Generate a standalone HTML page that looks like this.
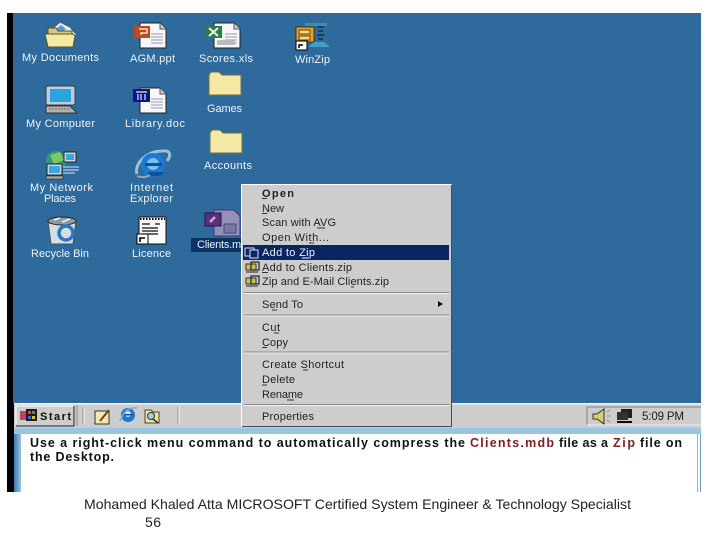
<!DOCTYPE html>
<html><head><meta charset="utf-8"><style>
html,body{margin:0;padding:0;background:#fff;width:720px;height:540px;overflow:hidden}
svg{display:block}
text{font-family:"Liberation Sans",sans-serif;font-size:11px}
.d text{fill:#eef3f8}
.m text{fill:#222}
.b text{font-weight:bold;font-size:12.5px;fill:#111}
</style></head><body>
<svg width="720" height="540" viewBox="0 0 720 540" xmlns="http://www.w3.org/2000/svg">
<defs>
<filter id="s" x="-5%" y="-5%" width="110%" height="110%"><feGaussianBlur stdDeviation="0.35"/></filter>
<linearGradient id="lb" x1="0" x2="1" y1="0" y2="0"><stop offset="0" stop-color="#3b78aa"/><stop offset="1" stop-color="#9cc4df"/></linearGradient>
<g id="folder"><path d="M1 4 L3 1 H11 L14 4 H33 V24 H1Z" fill="#f5e8a4" stroke="#6f7048"/></g>
<g id="page"><path d="M0 0H20L26 6V25H0Z" fill="#f7f7fb" stroke="#222"/><path d="M20 0V6H26" fill="#ccc" stroke="#555"/><path d="M11 11H23M11 14H23M11 17H23M11 20H23" stroke="#9a9aa8"/></g>
</defs>
<rect x="7" y="13" width="7" height="479" fill="#000"/>
<rect x="13" y="13" width="688" height="390" fill="#2f6a9c"/>
<rect x="14" y="403" width="687" height="25" fill="#cdcdcd"/>
<rect x="14" y="403" width="687" height="1.5" fill="#f4f4f4"/>
<rect x="14" y="428" width="687" height="6" fill="#9cc4df"/>
<rect x="14" y="434" width="7" height="58" fill="url(#lb)"/>
<rect x="21" y="434" width="676" height="58" fill="#fff"/>
<rect x="697" y="434" width="1" height="58" fill="#8fb5cf"/>
<rect x="700" y="434" width="1" height="58" fill="#6f9dbd"/>

<g filter="url(#s)">
<!-- My Documents -->
<path d="M52 29L60 22L70 27L77 35L70 38H54Z" fill="#e4eef4" stroke="#3e5a74"/><path d="M56 29L61 25L66 29L61 32Z" fill="#4f9ad0"/>
<path d="M48 28H56L58 31H72V47H48Z" fill="#d8c97e" stroke="#55562f"/><path d="M45 34H73L75 36L73 47H48Z" fill="#f5e9a6" stroke="#55562f"/>
<!-- AGM -->
<use href="#page" x="140" y="23"/><rect x="134" y="26" width="16" height="12" fill="#bf4a1e"/><path d="M139 29H147V33H141V35" fill="none" stroke="#f4ddc8" stroke-width="1.5"/>
<!-- Scores -->
<use href="#page" x="214" y="23"/><rect x="205" y="26" width="17" height="12" fill="#2e7a4c"/><path d="M209 28L218 36M218 28L209 36" stroke="#e6f2e4" stroke-width="2"/><rect x="217" y="40" width="18" height="5" fill="#bbb"/>
<!-- WinZip -->
<rect x="296" y="27" width="18" height="15" fill="#e9a52a" stroke="#4a2b0a"/><rect x="299" y="30" width="11" height="4" fill="#f6d77a" stroke="#6a3c0a"/><rect x="299" y="36" width="11" height="4" fill="#f6d77a" stroke="#6a3c0a"/><rect x="305" y="23" width="22" height="3" fill="#3c8bb8"/><path d="M317 27H324M318 31H323M317 35H324M318 39H323" stroke="#1e3f5a" stroke-width="2"/><path d="M308 47H330L324 42H314Z" fill="#3fa0c8"/><rect x="296" y="41" width="11" height="9" fill="#fff" stroke="#000"/><path d="M299 48L299 45H303" stroke="#000" fill="none" stroke-width="1.5"/>
<!-- Games / Accounts -->
<use href="#folder" x="208" y="71"/><use href="#folder" x="209" y="129"/>
<!-- My Computer -->
<rect x="46" y="86" width="29" height="19" rx="2" fill="#c2ccd8" stroke="#33414f"/><rect x="50" y="89" width="21" height="13" fill="#2aa4dc"/><path d="M46 106H70L77 113H46Z" fill="#b8b4ac" stroke="#333"/><path d="M49 109H71" stroke="#666" stroke-dasharray="2 1"/>
<!-- Library -->
<use href="#page" x="140" y="88"/><rect x="133" y="89" width="17" height="13" fill="#0b1482"/><path d="M136 92H147M138 94V100M141 94V100M145 94V100" stroke="#e8e8ff" stroke-width="1.2"/>
<!-- Network -->
<circle cx="56" cy="161" r="10" fill="#2f9c72"/><path d="M50 155L60 152L64 160L54 164Z" fill="#7fc66a"/><rect x="64" y="152" width="12" height="10" fill="#cdd8e4" stroke="#222"/><rect x="66" y="154" width="8" height="6" fill="#3aa6de"/><rect x="47" y="164" width="15" height="11" fill="#cdd8e4" stroke="#222"/><rect x="49" y="166" width="11" height="7" fill="#3aa6de"/><rect x="46" y="176" width="17" height="3" fill="#aaa" stroke="#333" stroke-width=".7"/><path d="M63 167H79M63 170H79M63 173H75" stroke="#d8e6f0"/>
<!-- IE -->
<path d="M137 174C134 164 146 151 163 151C171 150 171 156 167 161" fill="none" stroke="#9cc0dc" stroke-width="3"/><circle cx="153" cy="165" r="12" fill="#1b7ad2"/><circle cx="153" cy="164" r="6" fill="#7cc0ee"/><rect x="145" y="163" width="17" height="3" fill="#0d4fa0"/><path d="M147 172H164L160 176H150Z" fill="#0d4fa0"/><path d="M137 176C141 178 147 177 150 175" stroke="#8aa8c0" stroke-width="2" fill="none"/>
<!-- Recycle -->
<path d="M48 221H76L73 244H51Z" fill="#d6dde4" stroke="#41525e"/><ellipse cx="62" cy="221" rx="14" ry="4" fill="#8f9aa2" stroke="#222"/><path d="M54 220L60 218M62 222L70 219" stroke="#eee" stroke-width="1.5"/><circle cx="66" cy="233" r="7" fill="none" stroke="#2c78c8" stroke-width="3.5"/>
<!-- Licence -->
<rect x="139" y="217" width="27" height="27" rx="1" fill="#fbfbfb" stroke="#111"/><path d="M140 219H165" stroke="#000" stroke-dasharray="1.5 1.5" stroke-width="2"/><path d="M142 224H150M142 228H158M142 231H158M142 234H158M155 224H160" stroke="#111" stroke-width="1.3"/><rect x="137" y="234" width="11" height="10" fill="#fff" stroke="#000"/><path d="M140 242V238H145" stroke="#000" fill="none" stroke-width="1.6"/>
<!-- Clients -->
<path d="M214 210H234L240 216V236H214Z" fill="#9490bc" stroke="#3d3a6e"/><path d="M224 224H236V233H224Z" fill="#7a78a8" stroke="#4a4878"/><rect x="205" y="213" width="16" height="13" fill="#56307e" stroke="#281648"/><path d="M210 222L215 217" stroke="#e0a0d8" stroke-width="2.5"/>
</g>
<rect x="191" y="238" width="50" height="14" fill="#0a3263"/>

<g class="d">
<text x="22" y="61" textLength="77" lengthAdjust="spacing">My Documents</text>
<text x="130" y="62" textLength="45" lengthAdjust="spacing">AGM.ppt</text>
<text x="199" y="62" textLength="54" lengthAdjust="spacing">Scores.xls</text>
<text x="295" y="63" textLength="35" lengthAdjust="spacing">WinZip</text>
<text x="207" y="112" textLength="35" lengthAdjust="spacing">Games</text>
<text x="26" y="127" textLength="69" lengthAdjust="spacing">My Computer</text>
<text x="125" y="127" textLength="60" lengthAdjust="spacing">Library.doc</text>
<text x="204" y="169" textLength="48" lengthAdjust="spacing">Accounts</text>
<text x="30" y="191" textLength="63" lengthAdjust="spacing">My Network</text>
<text x="44" y="202" textLength="32" lengthAdjust="spacing">Places</text>
<text x="130" y="191" textLength="43" lengthAdjust="spacing">Internet</text>
<text x="130" y="202" textLength="43" lengthAdjust="spacing">Explorer</text>
<text x="31" y="257" textLength="58" lengthAdjust="spacing">Recycle Bin</text>
<text x="132" y="257" textLength="39" lengthAdjust="spacing">Licence</text>
<text x="197" y="248" textLength="56" lengthAdjust="spacing">Clients.mdb</text>
</g>

<!-- Taskbar -->
<rect x="16" y="406" width="58" height="20" fill="#cdcdcd"/><path d="M16 426H74V406" stroke="#222" fill="none"/><path d="M16 425V406H73" stroke="#fff" fill="none"/>
<g filter="url(#s)">
<rect x="20" y="411" width="6" height="9" fill="#c04060"/><rect x="26" y="409" width="11" height="12" fill="#1c1c1c"/><rect x="28" y="411" width="3" height="3" fill="#d8502a"/><rect x="32" y="411" width="3" height="3" fill="#4a9a3a"/><rect x="28" y="416" width="3" height="3" fill="#3a6ac8"/><rect x="32" y="416" width="3" height="3" fill="#e0c030"/>
<rect x="95" y="411" width="14" height="13" fill="#f3e7b0" stroke="#333"/><path d="M100 421L109 410" stroke="#7a3a1a" stroke-width="2"/>
<circle cx="128" cy="415" r="7" fill="#1d78d2"/><circle cx="128" cy="414" r="3" fill="#cfe6f8"/><rect x="124" y="414" width="8" height="1.5" fill="#0d4fa0"/><path d="M120 421C124 410 130 407 137 408" stroke="#8fa8c0" fill="none" stroke-width="1.5"/>
<path d="M145 410H151L153 412H159V423H145Z" fill="#f2e392" stroke="#444"/><circle cx="151" cy="416" r="3.500" fill="#9fd0e8" stroke="#234"/><path d="M153 419L158 423" stroke="#234" stroke-width="1.5"/>
<path d="M593 414H597L604 409V424L597 419H593Z" fill="#d8cf6a" stroke="#333"/><path d="M607 412L610 410M607 416H611M607 420L610 422" stroke="#8a8a8a"/>
<rect x="621" y="409" width="11" height="9" fill="#222"/><rect x="617" y="412" width="11" height="8" fill="#333"/><path d="M617 422H632" stroke="#111" stroke-width="2"/>
</g>
<text x="40" y="420" textLength="31" lengthAdjust="spacing" style="font-weight:bold;font-size:11px" fill="#111">Start</text>
<path d="M77 405V426M83 407V424M178 407V424" stroke="#8e8e8e"/><path d="M84 407V424M179 407V424" stroke="#fff"/>
<path d="M587 425V407H701" fill="none" stroke="#858585"/><path d="M587 425H701" stroke="#f0f0f0"/>
<text x="642" y="420" textLength="42" lengthAdjust="spacing" style="font-size:11.5px" fill="#1a1a1a">5:09 PM</text>

<!-- Menu -->
<rect x="241" y="184" width="211" height="243" fill="#cdcdcd"/>
<path d="M241.500 427V184.500H451" stroke="#fff" fill="none"/>
<path d="M451.500 185V426.500H242" stroke="#4a4a4a" fill="none"/>
<rect x="243" y="245" width="206" height="15" fill="#0a2466"/>
<g stroke="#868686"><path d="M244 292.500H449M244 315H449M244 352H449M244 404.500H449"/></g>
<g stroke="#f4f4f4"><path d="M244 293.500H449M244 316H449M244 353H449M244 405.500H449"/></g>
<g class="m">
<text x="262" y="197" textLength="32" lengthAdjust="spacing" font-weight="bold">Open</text>
<text x="262" y="212" textLength="22" lengthAdjust="spacing">New</text>
<text x="262" y="226" textLength="74" lengthAdjust="spacing">Scan with AVG</text>
<text x="262" y="241" textLength="67" lengthAdjust="spacing">Open With...</text>
<text x="262" y="256" textLength="53" lengthAdjust="spacing" style="fill:#f0f0f8">Add to Zip</text>
<text x="262" y="271" textLength="90" lengthAdjust="spacing">Add to Clients.zip</text>
<text x="262" y="285" textLength="127" lengthAdjust="spacing">Zip and E-Mail Clients.zip</text>
<text x="262" y="308" textLength="41" lengthAdjust="spacing">Send To</text>
<text x="262" y="331" textLength="18" lengthAdjust="spacing">Cut</text>
<text x="262" y="346" textLength="26" lengthAdjust="spacing">Copy</text>
<text x="262" y="368" textLength="82" lengthAdjust="spacing">Create Shortcut</text>
<text x="262" y="383" textLength="33" lengthAdjust="spacing">Delete</text>
<text x="262" y="398" textLength="41" lengthAdjust="spacing">Rename</text>
<text x="262" y="420" textLength="52" lengthAdjust="spacing">Properties</text>
</g>
<path d="M262 198.500H267M262 213.500H267M317 228H325M309 243H314M262 272.500H268M272 310H277M274 333H279M262 347.500H267M303 370H308M262 385H267M287 400H294M351 287H354" stroke="#333"/>
<path d="M302 258H309" stroke="#fff"/>
<path d="M438 301L443 304L438 307Z" fill="#111"/>
<!-- menu icons -->
<rect x="245" y="248" width="9" height="8" fill="#0a2466" stroke="#dfe4f4"/><rect x="250" y="250" width="8" height="8" fill="#0a2466" stroke="#dfe4f4"/>
<rect x="246" y="264" width="10" height="6" fill="#c8c050" stroke="#333"/><rect x="251" y="262" width="8" height="8" fill="none" stroke="#222" stroke-width="1.2"/><path d="M246 272H258" stroke="#222"/>
<rect x="246" y="278" width="10" height="6" fill="#c8c050" stroke="#333"/><rect x="251" y="276" width="8" height="8" fill="none" stroke="#222" stroke-width="1.2"/><path d="M246 286H258" stroke="#222"/>

<!-- Instructions -->
<g class="b">
<text x="30" y="447" textLength="435" lengthAdjust="spacing">Use a right-click menu command to automatically compress the</text>
<text x="470" y="447" textLength="84" lengthAdjust="spacing" style="fill:#7c1f1f">Clients.mdb</text>
<text x="559" y="447" textLength="49" lengthAdjust="spacing">file as a</text>
<text x="613" y="447" textLength="22" lengthAdjust="spacing" style="fill:#7c1f1f">Zip</text>
<text x="640" y="447" textLength="42" lengthAdjust="spacing">file on</text>
<text x="30" y="461" textLength="84" lengthAdjust="spacing">the Desktop.</text>
</g>
<text x="84" y="509" textLength="547" lengthAdjust="spacingAndGlyphs" style="font-size:14px" fill="#222">Mohamed Khaled Atta MICROSOFT Certified System Engineer &amp; Technology Specialist</text>
<text x="145" y="527" textLength="16" lengthAdjust="spacing" style="font-size:14px" fill="#222">56</text>
</svg>
</body></html>
